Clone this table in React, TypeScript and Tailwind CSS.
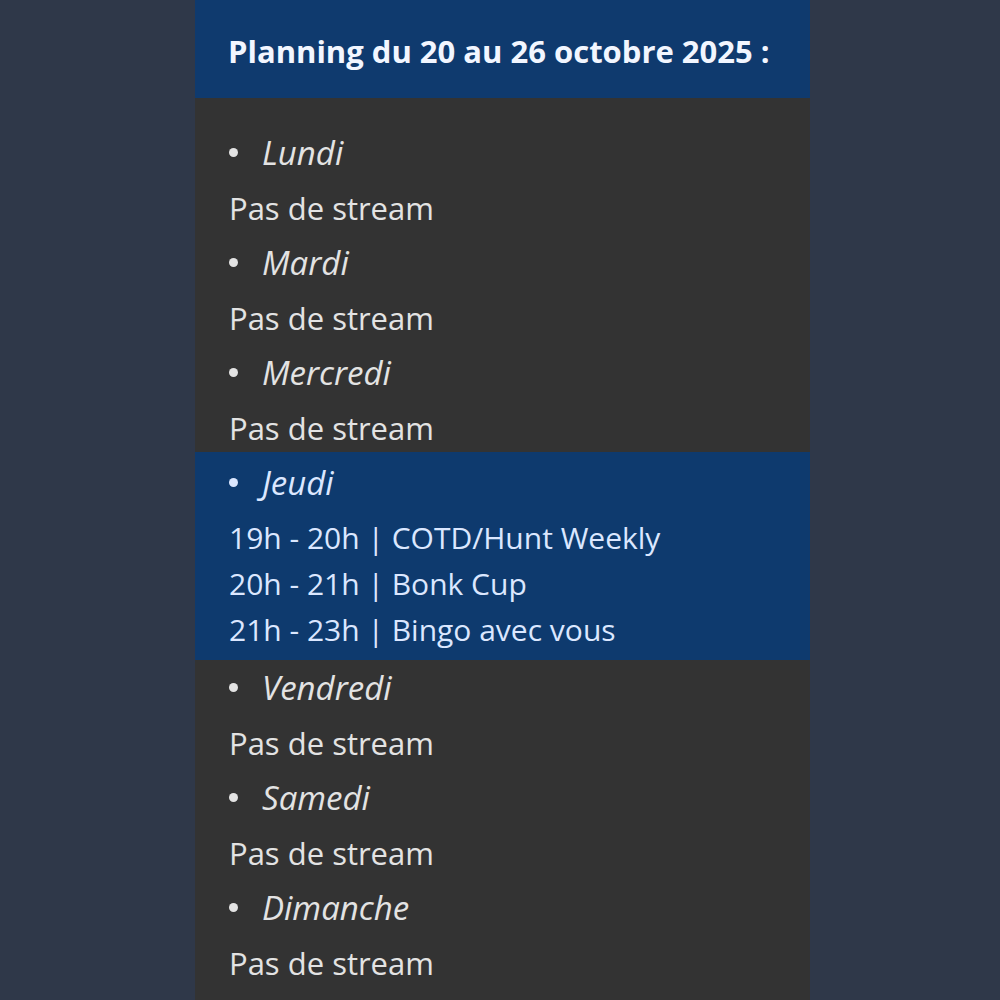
export default function App() {
  const days: { name: string; lines: string[]; hl?: boolean }[] = [
    { name: "Lundi", lines: ["Pas de stream"] },
    { name: "Mardi", lines: ["Pas de stream"] },
    { name: "Mercredi", lines: ["Pas de stream"] },
    {
      name: "Jeudi",
      lines: ["19h - 20h | COTD/Hunt Weekly", "20h - 21h | Bonk Cup", "21h - 23h | Bingo avec vous"],
      hl: true,
    },
    { name: "Vendredi", lines: ["Pas de stream"] },
    { name: "Samedi", lines: ["Pas de stream"] },
    { name: "Dimanche", lines: ["Pas de stream"] },
  ];
  return (
    <div className="w-[1000px] h-[1000px] bg-[#2f3849] flex justify-center overflow-hidden" style={{ fontFamily: "'Open Sans', Lato, sans-serif" }}>
      <div className="w-[615px] ml-[5px] bg-[#333333] flex flex-col">
        <div className="h-[98px] bg-[#0f3a6e] flex items-center px-[33px] pt-[4px]">
          <h1 className="text-[31px] font-bold text-[#f2f6ff]">Planning du 20 au 26 octobre 2025 :</h1>
        </div>
        <div className="pt-[27px]">
          {days.map((d) => (
            <div key={d.name} className={d.hl ? "bg-[#0e3a6e] text-[#dbe7ff] -mt-[3px] pt-[3px] pb-[3px]" : "text-[#e3e3e3]"}>
              <div className="h-[55px] flex items-center pl-[34px]">
                <span className="w-[9px] h-[9px] rounded-full bg-current mr-[24px]" />
                <span className="italic text-[33px]">{d.name}</span>
              </div>
              <div className="pl-[34px] pt-[5px] pb-[4px]">
                {d.lines.map((l) => (
                  <div key={l} className={d.hl ? "text-[30px] leading-[46px]" : "text-[31px] leading-[46px]"}>{l}</div>
                ))}
              </div>
            </div>
          ))}
        </div>
      </div>
    </div>
  );
}
